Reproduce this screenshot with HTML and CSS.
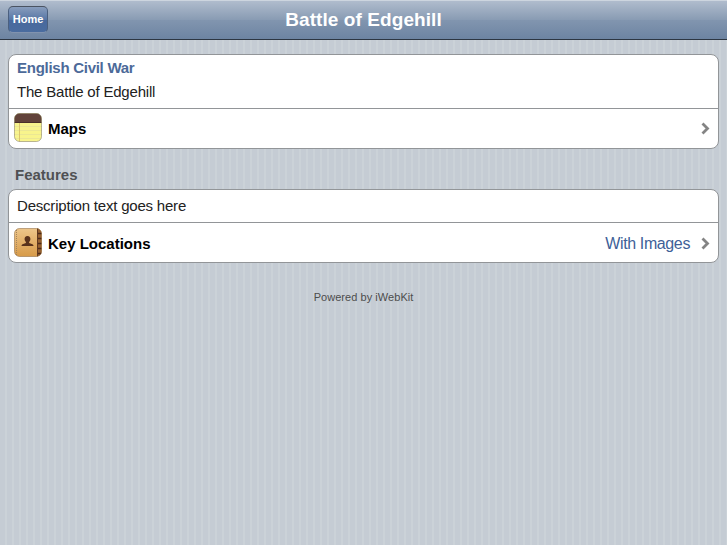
FILE: index.html
```
<!DOCTYPE html>
<html lang="en">
<head>
    <meta charset="utf-8">
    <title>Battle of Edgehill</title>
    <link rel="stylesheet" href="styles.css">
</head>
<body>
    <div class="topbar">
        <div class="leftbutton"><a href="#">Home</a></div>
        <div class="title">Battle of Edgehill</div>
    </div>

    <div class="content">
        <ul class="pageitem">
            <li class="textbox">
                <span class="header">English Civil War</span>
                <p>The Battle of Edgehill</p>
            </li>
            <li class="menu">
                <a href="#">
                    <svg class="icon" viewBox="0 0 29 30">
                        <defs>
                            <clipPath id="noteShape"><rect x="0.5" y="0.5" width="27" height="28" rx="5"/></clipPath>
                        </defs>
                        <g clip-path="url(#noteShape)">
                            <rect width="29" height="30" fill="#f8f48c"/>
                            <rect width="29" height="9.5" fill="#62433a"/>
                            <path d="M0 9.5h29" stroke="#4a302a"/>
                            <path d="M0 13.5h29M0 17.5h29M0 21.5h29M0 25.5h29" stroke="#ebe794"/>
                            <path d="M5.5 10v20" stroke="#dcc66c"/>
                        </g>
                        <rect x="0.5" y="0.5" width="27" height="28" rx="5" fill="none" stroke="#77705a" stroke-opacity=".5"/>
                    </svg>
                    <span class="name">Maps</span>
                    <svg class="arrow" viewBox="0 0 9 13"><path d="M1.5 1.5l5 5-5 5"/></svg>
                </a>
            </li>
        </ul>

        <span class="graytitle">Features</span>
        <ul class="pageitem">
            <li class="textbox short">
                <p>Description text goes here</p>
            </li>
            <li class="menu">
                <a href="#">
                    <svg class="icon" viewBox="0 0 29 30">
                        <defs>
                            <clipPath id="bookShape"><rect x="0.5" y="0.5" width="27" height="28" rx="5"/></clipPath>
                            <linearGradient id="bookCover" x1="0" y1="0" x2="0" y2="1">
                                <stop offset="0" stop-color="#edc68b"/>
                                <stop offset="1" stop-color="#d69845"/>
                            </linearGradient>
                        </defs>
                        <g clip-path="url(#bookShape)">
                            <rect width="29" height="30" fill="url(#bookCover)"/>
                            <path d="M2.5 2v26" stroke="#a4845c" stroke-dasharray="1 1"/>
                            <rect x="23" width="6" height="30" fill="#96602f"/>
                            <path d="M23.5 0v30" stroke="#60381f"/>
                            <path d="M24 5.5h4M24 10.5h4M24 15.5h4M24 20.5h4M24 25.5h4" stroke="#4b2b1b" stroke-width="1.5"/>
                        </g>
                        <path d="M13.5 8c2 0 3.100 1.400 2.900 3.300-.1 1.300-.7 2.100-1.300 2.700v1l3.400 1.200c.7.3 1 .9 1 1.800h-12c0-.9.3-1.500 1-1.800l3.400-1.200v-1c-.6-.6-1.200-1.400-1.300-2.700-.2-1.900.9-3.300 2.900-3.300z" fill="#59321c"/>
                        <rect x="0.5" y="0.5" width="27" height="28" rx="5" fill="none" stroke="#865f36" stroke-opacity=".5"/>
                    </svg>
                    <span class="name">Key Locations</span>
                    <span class="comment">With Images</span>
                    <svg class="arrow" viewBox="0 0 9 13"><path d="M1.5 1.5l5 5-5 5"/></svg>
                </a>
            </li>
        </ul>
    </div>

    <div class="footer"><a href="#">Powered by iWebKit</a></div>
</body>
</html>
```
FILE: styles.css
```
body {
    margin: 0;
    min-height: 545px;
    font-family: "Liberation Sans", Helvetica, Arial, sans-serif;
    color: #222;
    background: repeating-linear-gradient(90deg, #c5ccd4 0, #c5ccd4 5px, #cbd2d8 5px, #cbd2d8 7px);
}

a {
    color: inherit;
    text-decoration: none;
}

.topbar {
    display: grid;
    grid-template-columns: 100px 1fr 100px;
    box-sizing: border-box;
    height: 40px;
    border-top: 1px solid #cdd5df;
    border-bottom: 1px solid #2d3642;
    background: linear-gradient(#b0bccd, #889bb3 50%, #8195af 51%, #6d84a2);
}

.leftbutton {
    padding: 5px 0 0 8px;
}

.leftbutton a {
    display: block;
    box-sizing: border-box;
    width: 40px;
    height: 27px;
    border: 1px solid #4b607f;
    border-top-color: #4a5361;
    border-bottom-color: #8193af;
    border-radius: 5px;
    background: linear-gradient(#889dbd, #5877a6 50%, #48699d 51%, #4a6c9f);
    color: #fff;
    font-size: 11px;
    font-weight: bold;
    line-height: 24px;
    text-align: center;
}

.title {
    color: #fff;
    font-size: 19px;
    font-weight: bold;
    letter-spacing: 0.08px;
    line-height: 37px;
    text-align: center;
}

.content {
    padding: 14px 8px 0;
}

.pageitem {
    margin: 0;
    padding: 0;
    border: 1px solid #929598;
    border-radius: 8px;
    background: #fff;
    list-style: none;
}

.textbox {
    box-sizing: border-box;
    height: 53px;
    padding: 3px 8px 0;
}

.textbox.short {
    height: 32px;
    padding-top: 6px;
}

.header {
    display: block;
    color: #4c6a99;
    font-size: 15px;
    font-weight: bold;
    letter-spacing: -0.27px;
    line-height: 20px;
}

.textbox p {
    margin: 0;
    font-size: 15px;
    letter-spacing: -0.2px;
    line-height: 20px;
}

.header + p {
    margin-top: 4px;
}

.menu {
    border-top: 1px solid #929598;
}

.menu a {
    display: flex;
    align-items: center;
    box-sizing: border-box;
    height: 39px;
    padding: 0 8px 0 5px;
}

.short + .menu a {
    padding-top: 2px;
}

.icon {
    width: 29px;
    height: 30px;
    margin: 0 5px 1px 0;
}

.name {
    flex: 1;
    padding-top: 1px;
    color: #000;
    font-size: 15px;
    font-weight: bold;
    line-height: 20px;
}

.comment {
    margin-right: 11px;
    padding-top: 1px;
    color: #405f98;
    font-size: 16px;
    letter-spacing: -0.38px;
    line-height: 20px;
}

.arrow {
    width: 9px;
    height: 13px;
    fill: none;
    stroke: #848484;
    stroke-width: 2.8;
}

.graytitle {
    display: block;
    padding: 16px 7px 4px;
    color: #4f5153;
    font-size: 15px;
    font-weight: bold;
    line-height: 20px;
}

.footer {
    margin-top: 27px;
    color: #4d4d4d;
    font-size: 11px;
    letter-spacing: 0.05px;
    line-height: 14px;
    text-align: center;
}
```
